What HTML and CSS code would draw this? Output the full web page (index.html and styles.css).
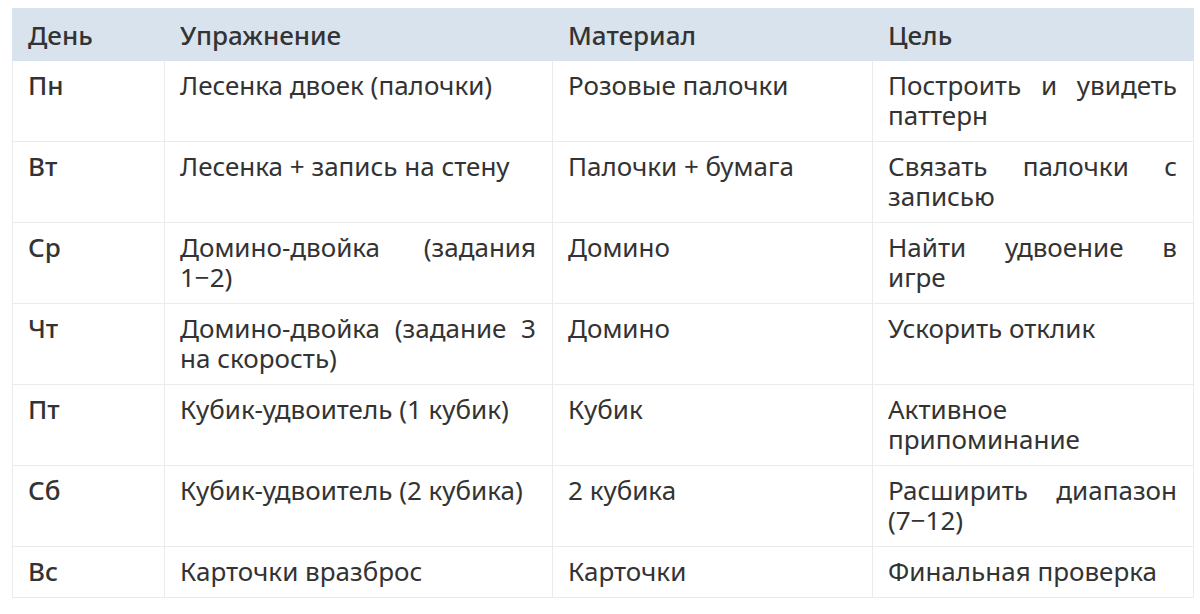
FILE: index.html
```html
<!DOCTYPE html>
<html lang="ru">
<head>
<meta charset="utf-8">
<link rel="stylesheet" href="styles.css">
</head>
<body>
<table class="plan">
  <colgroup>
    <col class="c-day"><col class="c-ex"><col class="c-mat"><col class="c-goal">
  </colgroup>
  <thead>
    <tr><th>День</th><th>Упражнение</th><th>Материал</th><th>Цель</th></tr>
  </thead>
  <tbody>
    <tr><td class="day">Пн</td><td>Лесенка двоек (палочки)</td><td>Розовые палочки</td><td>Построить и увидеть паттерн</td></tr>
    <tr><td class="day">Вт</td><td>Лесенка + запись на стену</td><td>Палочки + бумага</td><td>Связать палочки с записью</td></tr>
    <tr><td class="day">Ср</td><td>Домино-двойка (задания 1−2)</td><td>Домино</td><td>Найти удвоение в игре</td></tr>
    <tr><td class="day">Чт</td><td>Домино-двойка (задание 3 на скорость)</td><td>Домино</td><td>Ускорить отклик</td></tr>
    <tr><td class="day">Пт</td><td>Кубик-удвоитель (1 кубик)</td><td>Кубик</td><td>Активное припоминание</td></tr>
    <tr><td class="day">Сб</td><td>Кубик-удвоитель (2 кубика)</td><td>2 кубика</td><td>Расширить диапазон (7−12)</td></tr>
    <tr><td class="day">Вс</td><td>Карточки вразброс</td><td>Карточки</td><td>Финальная проверка</td></tr>
  </tbody>
</table>
</body>
</html>
```
FILE: styles.css
```css
html, body {
  margin: 0;
  background: #ffffff;
}
body {
  padding: 8px 8px 0 12px;
  font-family: "Noto Sans", "DejaVu Sans", sans-serif;
  color: #333333;
}
.plan {
  border-collapse: collapse;
  table-layout: fixed;
  width: 1181px;
  font-size: 26px;
  line-height: 30px;
}
.c-day { width: 152px; }
.c-ex { width: 388px; }
.c-mat { width: 320px; }
.c-goal { width: 321px; }
.plan th, .plan td {
  border: 1px solid #ebebeb;
  padding: 9px 16px 11px 15px;
  text-align: justify;
  vertical-align: top;
}
.plan th {
  background: #d8e3ee;
  border-color: #d8e3ee;
  font-weight: 500;
  text-align: left;
  padding-top: 11px;
  padding-bottom: 10px;
}
.plan td.day {
  font-weight: 500;
}
```
